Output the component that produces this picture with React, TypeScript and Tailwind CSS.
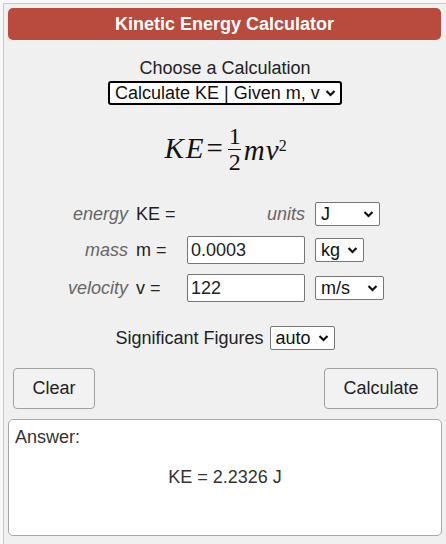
import React from 'react';

const Chevron: React.FC = () => (
  <svg width="11" height="8" viewBox="0 0 11 8" className="shrink-0">
    <polyline points="1.5,2 5.5,6 9.5,2" fill="none" stroke="#111" strokeWidth="2.2" />
  </svg>
);

const FakeSelect: React.FC<{ value: string; className?: string; focused?: boolean }> = ({
  value,
  className = '',
  focused = false,
}) => (
  <div
    className={`flex items-center justify-between whitespace-nowrap bg-white text-[18px] leading-none text-[#111] ${
      focused ? 'border-2 border-black rounded-[3px] pl-[5px] pr-[4px]' : 'border border-[#767676] rounded-[2px] px-[5px]'
    } ${className}`}
  >
    <span>{value}</span>
    <span className="ml-[4px]">
      <Chevron />
    </span>
  </div>
);

const Label: React.FC<{ children: React.ReactNode }> = ({ children }) => (
  <div className="text-right italic text-[#666]">{children}</div>
);

const App: React.FC = () => {
  return (
    <div className="w-[446px] h-[544px] bg-[#f7f7f7] pt-[3px] pl-[3px] font-['Liberation_Sans',Arial,sans-serif] text-[18px] text-[#222]">
      <div className="h-[541px] border-l border-t border-[#c8c8c8] bg-[#f0f0f0] pl-[4px] pr-[4px] pt-[4px]">
        {/* header */}
        <div className="h-[32px] w-[433px] rounded-[5px] bg-[#b84b3e] flex items-center justify-center font-bold text-white">
          Kinetic Energy Calculator
        </div>

        <div className="mt-[18px] h-[21px] text-center leading-[21px]">Choose a Calculation</div>
        <div className="mt-[2px] flex justify-center">
          <FakeSelect value="Calculate KE | Given m, v" focused className="h-[24px] w-[234px]" />
        </div>

        {/* formula */}
        <div className="mt-[17px] h-[54px] flex items-center justify-center font-['Liberation_Serif','Times_New_Roman',serif] text-[29px] text-[#111] ml-[2px]">
          <span className="italic tracking-[2px]">KE</span>
          <span className="ml-[1px] mr-[5px]">=</span>
          <span className="inline-flex flex-col items-center text-[24px] leading-[25px]">
            <span className="px-[1px]">1</span>
            <span className="h-[1px] w-[13px] bg-[#111]" />
            <span className="px-[1px]">2</span>
          </span>
          <span className="italic ml-[2px] tracking-[1px] mt-[4px]">
            mv<sup className="not-italic text-[16px] relative top-[-9px] ml-[-1px]">2</sup>
          </span>
        </div>

        {/* inputs */}
        <div className="mt-[26px] grid grid-cols-[120px_43px_118px_auto] grid-rows-[24px_28px_28px] gap-x-2 gap-y-[10px] items-center leading-none">
          <Label>energy</Label>
          <div className="text-[#222]">KE =</div>
          <Label>units</Label>
          <FakeSelect value="J" className="ml-[2px] h-[24px] w-[65px]" />

          <Label>mass</Label>
          <div>m =</div>
          <div className="h-[28px] border border-[#767676] bg-white rounded-[2px] flex items-center pl-[3px]">0.0003</div>
          <FakeSelect value="kg" className="ml-[2px] h-[24px] w-[49px]" />

          <Label>velocity</Label>
          <div>v =</div>
          <div className="h-[28px] border border-[#767676] bg-white rounded-[2px] flex items-center pl-[3px]">122</div>
          <FakeSelect value="m/s" className="ml-[2px] h-[24px] w-[69px]" />
        </div>

        <div className="mt-[24px] h-[24px] flex items-center justify-center gap-[6px]">
          <span>Significant Figures</span>
          <FakeSelect value="auto" className="h-[24px] w-[65px]" />
        </div>

        {/* buttons */}
        <div className="mt-[18px] flex justify-between pl-[5px] pr-[4px]">
          <button className="h-[41px] w-[82px] rounded-[4px] border border-[#a0a0a0] bg-[#f2f2f2] text-[#222]">
            Clear
          </button>
          <button className="h-[41px] w-[114px] rounded-[4px] border border-[#a0a0a0] bg-[#f2f2f2] text-[#222]">
            Calculate
          </button>
        </div>

        {/* answer */}
        <div className="mt-[10px] h-[117px] w-[434px] rounded-[5px] border border-[#a8a8a8] bg-white px-[6px] pt-[7px]">
          <div className="leading-[21px] text-[#333]">Answer:</div>
          <div className="mt-[19px] text-center leading-[21px] text-[#333]">KE = 2.2326 J</div>
        </div>
      </div>
    </div>
  );
};

export default App;
